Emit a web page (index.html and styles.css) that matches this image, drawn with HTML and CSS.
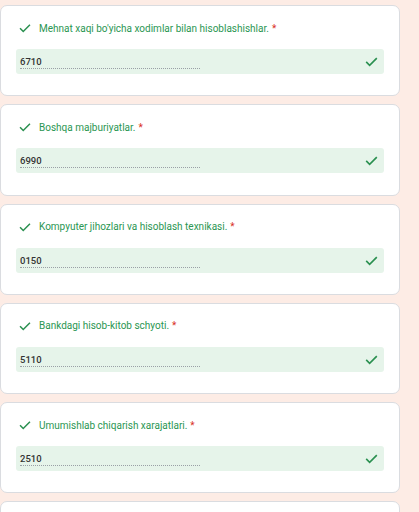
FILE: index.html
```html
<!DOCTYPE html>
<html>
<head>
<meta charset="utf-8">
<link rel="stylesheet" href="styles.css">
</head>
<body>
<div class="list">
  <div class="card">
    <div class="title"><svg class="ok" viewBox="0 0 24 24"><path d="M3.5 12.5l5.5 5.5 11.5-11.5"/></svg><span>Mehnat xaqi bo'yicha xodimlar bilan hisoblashishlar.</span><span class="req">*</span></div>
    <div class="field"><div class="val">6710</div><svg class="ok sm" viewBox="0 0 24 24"><path d="M3.5 12.5l5.5 5.5 11.5-11.5"/></svg></div>
  </div>
  <div class="card">
    <div class="title"><svg class="ok" viewBox="0 0 24 24"><path d="M3.5 12.5l5.5 5.5 11.5-11.5"/></svg><span>Boshqa majburiyatlar.</span><span class="req">*</span></div>
    <div class="field"><div class="val">6990</div><svg class="ok sm" viewBox="0 0 24 24"><path d="M3.5 12.5l5.5 5.5 11.5-11.5"/></svg></div>
  </div>
  <div class="card">
    <div class="title"><svg class="ok" viewBox="0 0 24 24"><path d="M3.5 12.5l5.5 5.5 11.5-11.5"/></svg><span>Kompyuter jihozlari va hisoblash texnikasi.</span><span class="req">*</span></div>
    <div class="field"><div class="val">0150</div><svg class="ok sm" viewBox="0 0 24 24"><path d="M3.5 12.5l5.5 5.5 11.5-11.5"/></svg></div>
  </div>
  <div class="card">
    <div class="title"><svg class="ok" viewBox="0 0 24 24"><path d="M3.5 12.5l5.5 5.5 11.5-11.5"/></svg><span>Bankdagi hisob-kitob schyoti.</span><span class="req">*</span></div>
    <div class="field"><div class="val">5110</div><svg class="ok sm" viewBox="0 0 24 24"><path d="M3.5 12.5l5.5 5.5 11.5-11.5"/></svg></div>
  </div>
  <div class="card">
    <div class="title"><svg class="ok" viewBox="0 0 24 24"><path d="M3.5 12.5l5.5 5.5 11.5-11.5"/></svg><span>Umumishlab chiqarish xarajatlari.</span><span class="req">*</span></div>
    <div class="field"><div class="val">2510</div><svg class="ok sm" viewBox="0 0 24 24"><path d="M3.5 12.5l5.5 5.5 11.5-11.5"/></svg></div>
  </div>
  <div class="card"></div>
</div>
</body>
</html>
```
FILE: styles.css
```css
html, body {
  margin: 0;
  padding: 0;
  background: #fdece5;
  overflow: hidden;
}
body {
  font-family: Roboto, "Liberation Sans", sans-serif;
  width: 419px;
  height: 512px;
}
.list {
  display: flex;
  flex-direction: column;
  gap: 8px;
  padding: 5px 19px 0 0;
}
.card {
  box-sizing: border-box;
  height: 91.3px;
  background: #fff;
  border: 1px solid #dadce0;
  border-radius: 7px;
  padding: 15px 15px 0 15px;
  flex: none;
}
.title {
  display: flex;
  align-items: center;
  height: 14px;
  color: #2a9652;
  font-size: 10px;
}
.title .ok {
  width: 14px;
  height: 14px;
  margin: 0 7px 0 2px;
}
.req {
  color: #d93025;
  margin-left: 3px;
}
.ok {
  fill: none;
  stroke: #2a9050;
  stroke-width: 2.6;
  flex: none;
}
.field {
  margin-top: 14px;
  height: 25px;
  background: #e6f4ea;
  border-radius: 3px;
  display: flex;
  align-items: center;
  justify-content: space-between;
  padding: 0 5px 0 4px;
}
.val {
  width: 180px;
  font-size: 9.5px;
  font-weight: 500;
  color: #333;
  border-bottom: 1px dotted #9aa0a6;
  padding-bottom: 1px;
  margin-top: 2px;
}
.ok.sm {
  width: 15px;
  height: 15px;
}
```
